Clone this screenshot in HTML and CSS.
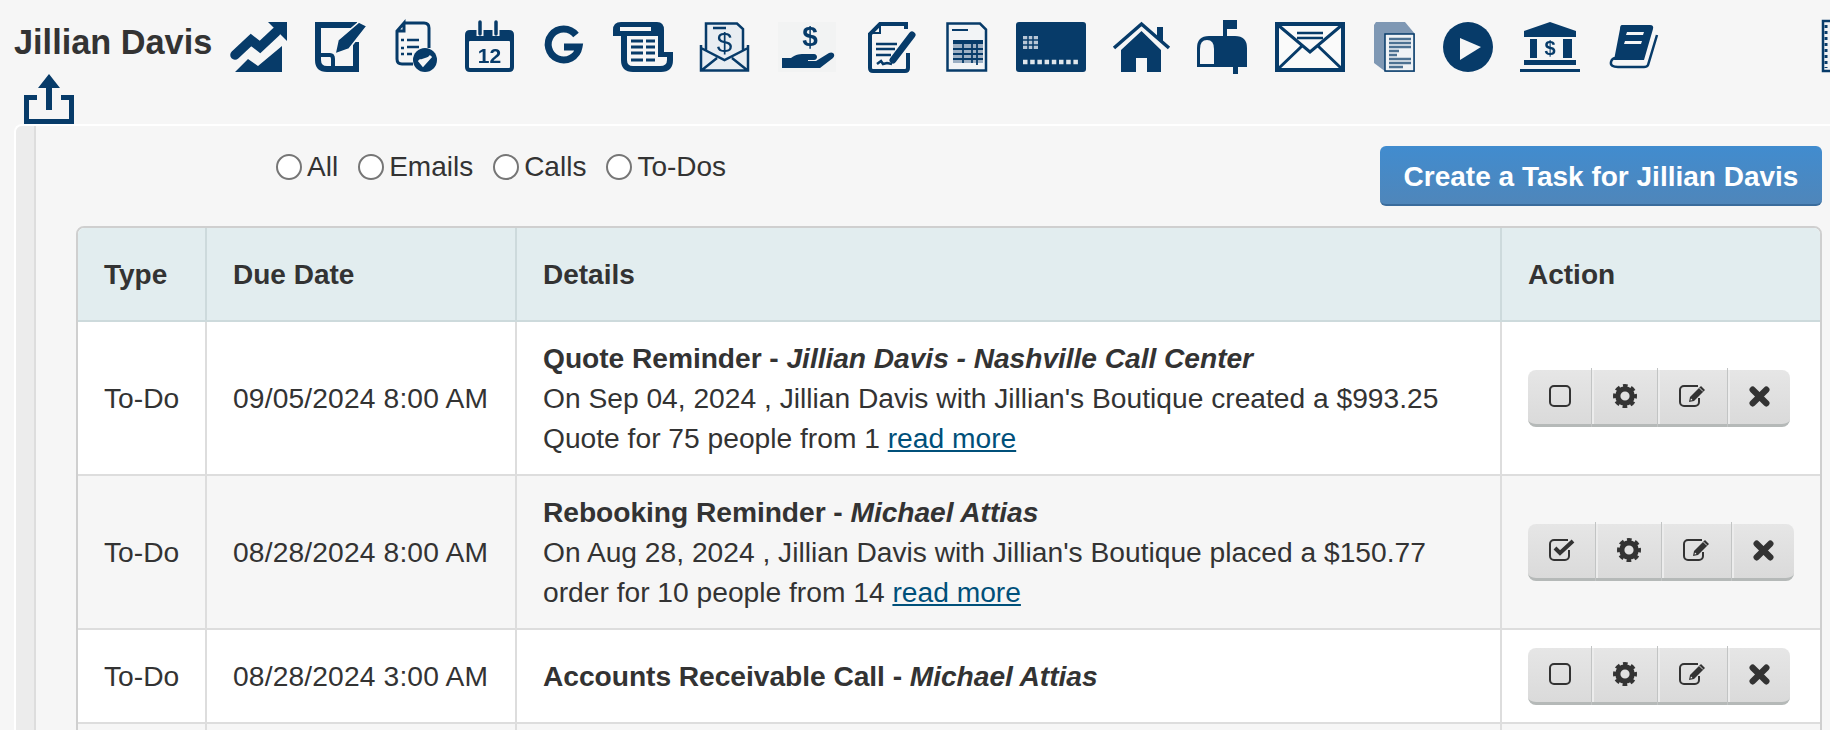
FILE: index.html
```html
<!DOCTYPE html>
<html lang="en">
<head>
<meta charset="utf-8">
<title>Jillian Davis</title>
<link rel="stylesheet" href="styles.css">
</head>
<body>
<svg class="defs" width="0" height="0" aria-hidden="true">
  <symbol id="i-square" viewBox="0 0 22 22"><rect x="1" y="1" width="20" height="20" rx="4" fill="none" stroke="#333" stroke-width="2"/></symbol>
  <symbol id="i-check" viewBox="0 0 26 22"><path d="M20 11v6a4 4 0 0 1-4 4H5a4 4 0 0 1-4-4V5a4 4 0 0 1 4-4h14" fill="none" stroke="#333" stroke-width="2"/><path d="M6 9l5 5L24 2" fill="none" stroke="#333" stroke-width="4"/></symbol>
  <symbol id="i-gear" viewBox="0 0 24 24"><circle cx="12" cy="12" r="7.2" fill="none" stroke="#333" stroke-width="5.2"/><circle cx="12" cy="12" r="10.2" fill="none" stroke="#333" stroke-width="3.6" stroke-dasharray="4.6 3.41" stroke-dashoffset="2.3"/></symbol>
  <symbol id="i-edit" viewBox="0 0 28 22"><path d="M20 13v4a4 4 0 0 1-4 4H5a4 4 0 0 1-4-4V5a4 4 0 0 1 4-4h14" fill="none" stroke="#333" stroke-width="2"/><path d="M10 17l1-5L22 1l4 4L15 16z" fill="#333"/><path d="M11.5 15.500l.5-2 1.500 1.500z" fill="#fff"/><path d="M20.500 3l3.500 3.500" stroke="#ddd" stroke-width="1"/></symbol>
  <symbol id="i-x" viewBox="0 0 20 20"><path d="M3.500 3.500l13 13M16.500 3.500l-13 13" fill="none" stroke="#333" stroke-width="6" stroke-linecap="round"/></symbol>
</svg>
<header class="top">
  <div class="toolbar">
    <h1 class="name">Jillian Davis</h1>
    <svg class="tool" width="61" height="50" viewBox="0 0 61 50"><path d="M5 33 21 18l9 7L46 10" fill="none" stroke-width="9.500" stroke-linecap="round"/><path class="solid" d="M38 0H57V19Z"/><path class="solid" d="M5 50 18 37l10 7L52 24V50Z"/></svg>
    <svg class="tool" width="56" height="50" viewBox="0 0 56 50"><path d="M42 3H3V38Q3 47 12 47H41V20" fill="none" stroke-width="6"/><path d="M5 33H15Q18 33 18 37V46" fill="none" stroke-width="4"/><path class="solid pen" d="M20 32 23 18 44 0 52 4 34 27Z"/></svg>
    <svg class="tool" width="46" height="50" viewBox="0 0 46 50"><path d="M9 1H29Q34 1 34 6V26M18 42H7Q2 42 2 37V9L9 1V9H2" fill="none" stroke-width="3"/><path d="M6 18h3M6 26h3M6 32h3M12 18h12M12 25h12M12 32h5" stroke-width="2.500"/><circle class="solid" cx="30" cy="38" r="12"/><path class="cut" d="M24 38l4 5 8-9" fill="none" stroke-width="3"/></svg>
    <svg class="tool" width="55" height="50" viewBox="0 0 55 50"><path class="solid" d="M5 8H44Q49 8 49 13V45Q49 50 44 50H5Q0 50 0 45V13Q0 8 5 8Z"/><rect class="cut" x="4" y="19" width="41" height="27" rx="1"/><path class="cutline" d="M15 0V14M31 0V14" stroke-width="7"/><path d="M15 0V12M31 0V12" stroke-width="3.500" stroke-linecap="round"/><text class="num" x="24.500" y="41" text-anchor="middle">12</text></svg>
    <svg class="tool" width="45" height="50" viewBox="0 0 45 50"><path d="M32 13A15.500 15.500 0 1 0 35 25H20" fill="none" stroke-width="7"/></svg>
    <svg class="tool" width="63" height="50" viewBox="0 0 63 50"><path class="solid" d="M8 0H44Q51 0 51 8V30H60V38Q60 50 48 50H20Q8 50 8 38V14H0V8Q0 0 8 0Z"/><path class="cut" d="M7 5H38V9H7ZM14 14H45V35H54V38Q54 44 47 44H20Q14 44 14 38Z"/><path d="M18 19H30M33 19H42M18 25H30M33 25H42M18 31H30M33 31H42M18 38H30M33 38H42" stroke-width="3"/></svg>
    <svg class="tool" width="54" height="50" viewBox="0 0 54 50"><path class="tint" d="M6 22V1H37L43 7V22L49 26V49H1V26Z"/><path d="M6 28V1.500H37L43 7V28M1 23V48.500H48V23M1 26 24.500 38 48 26M2 48 17 36M47 48 32 36M13 6H26" fill="none" stroke-width="2.500"/><text class="dollar" x="24.500" y="30" text-anchor="middle">$</text></svg>
    <svg class="tool" width="66" height="50" viewBox="0 0 66 50"><rect class="haze" width="58" height="50"/><text class="hand-dollar" x="32" y="24" text-anchor="middle">$</text><path class="solid" d="M4 36H13C18 32 22 32 28 32H36C40 32 40 38 36 38H30V39H38L51 31C55 29 58 33 55 36L42 46H4Z"/></svg>
    <svg class="tool" width="54" height="50" viewBox="0 0 54 50"><path d="M38 7V2H12L2 12V46Q2 49 5 49H37Q40 49 40 46V31" fill="none" stroke-width="4"/><path d="M12 3V11H3" fill="none" stroke-width="2"/><path d="M8 22H29M8 27H27M8 33H23M9 42 13 39 15 42 19 41 24 42" fill="none" stroke-width="2.500"/><path d="M25 38 44 13" stroke-width="7" stroke-linecap="round"/></svg>
    <svg class="tool" width="46" height="50" viewBox="0 0 46 50"><path d="M1.500 1.500H34L40 7.500V48.500H1.500Z" fill="#f2f4f6" stroke-width="2.500"/><path d="M6 8H22" stroke-width="2"/><path class="solid" d="M7 18H37V22H7Z"/><path class="soft" d="M7 22H37V41H7Z"/><path d="M7 27H37M7 32H37M7 37H37M17 22V41M26 22V41M31 22V43" stroke-width="1.800"/></svg>
    <svg class="tool" width="73" height="50" viewBox="0 0 73 50"><rect class="solid" width="70" height="50" rx="3"/><path class="pale" d="M7 14H22V27H7Z"/><path d="M7 18H22M7 23H22M12 14V27M17 14V27" stroke-width="1.500"/><path class="dots" d="M7 40H63" stroke-width="4.500" stroke-dasharray="4.500 2.700"/></svg>
    <svg class="tool" width="60" height="50" viewBox="0 0 60 50"><path d="M1 26 28.500 2 56 26" fill="none" stroke-width="3.500"/><path class="solid" d="M44 5H50V21L44 16Z"/><path class="solid" d="M8 28 28.500 9 48 28V50H34V36H23V50H8Z"/></svg>
    <svg class="tool" width="54" height="50" viewBox="0 0 54 50"><path class="solid" d="M26 -2H40V7H30V14H38Q50 14 50 26V45H41V52H36V45H0V26Q0 14 12 14H26Z"/><path class="cut" d="M3 42V27Q3 18 10 18Q17 18 17 27V42Z"/></svg>
    <svg class="tool" width="74" height="50" viewBox="0 0 74 50"><rect x="2" y="2" width="66" height="46" fill="#fafafa" stroke-width="4"/><path d="M3 3 35 30 67 3M3 47 27 24M67 47 43 24" fill="none" stroke-width="3"/><path d="M22 11H48M22 16H48" stroke-width="2.500"/></svg>
    <svg class="tool" width="46" height="50" viewBox="0 0 46 50"><path class="gray" d="M1 3 3 0H32L42 12V50H13L1 41Z"/><rect x="12" y="12" width="29" height="37" fill="#f0f3f6" stroke-width="1.500"/><path d="M16 17H38M16 21H38M16 25H38M16 29H26M16 33H24M16 37H38M16 41H38M16 45H30" stroke-width="2.400" opacity=".7"/></svg>
    <svg class="tool" width="53" height="50" viewBox="0 0 53 50"><circle class="solid" cx="25" cy="25" r="25"/><path class="cut" d="M17 16 38 25 17 38Z"/></svg>
    <svg class="tool" width="66" height="50" viewBox="0 0 66 50"><path class="solid" d="M4 9 30 0 56 9V15H4ZM10 17H17V36H10ZM43 17H52V36H43ZM4 38H56V43H4ZM0 47H60V50H0Z"/><text class="bank-dollar" x="30" y="33" text-anchor="middle">$</text></svg>
    <svg class="tool" width="188" height="50" viewBox="0 0 188 50"><path class="solid" d="M12 3H40Q44 3 43 7L34 38H4L10 7Q10 3 12 3Z"/><path class="cut" d="M17 10H34L33 13H16ZM15 19H32L31 22H14Z"/><path d="M47 13 38 43Q37 45 34 45H8Q0 45 1 40Q2 36 6 36" fill="none" stroke-width="2.500"/></svg>
    <svg class="tool" width="47" height="50" viewBox="0 0 47 50"><rect x="1" y="-1" width="46" height="50" fill="#eef1f4" stroke-width="2.500"/><path d="M4 3V46" stroke-width="3" stroke-dasharray="3 3"/></svg>
  </div>
  <svg class="tool share" width="50" height="50" viewBox="0 0 50 50"><path d="M13 23.500H2.500V47.500H47.500V23.500H37" fill="none" stroke-width="5"/><path class="solid" d="M25 0 36 14H28V36H22V14H14Z"/></svg>
</header>
<main class="panel">
  <div class="rail"></div>
  <div class="content">
    <div class="controls">
      <form class="filters">
        <label class="filter"><input type="radio" name="f">All</label>
        <label class="filter"><input type="radio" name="f">Emails</label>
        <label class="filter"><input type="radio" name="f">Calls</label>
        <label class="filter"><input type="radio" name="f">To-Dos</label>
      </form>
      <button class="create" type="button">Create a Task for Jillian Davis</button>
    </div>
    <div class="table-wrap">
      <table class="tasks">
        <colgroup><col class="c-type"><col class="c-date"><col class="c-details"><col></colgroup>
        <thead><tr><th>Type</th><th>Due Date</th><th>Details</th><th>Action</th></tr></thead>
        <tbody>
          <tr>
            <td>To-Do</td><td>09/05/2024 8:00 AM</td>
            <td><b>Quote Reminder - <i>Jillian Davis - Nashville Call Center</i></b><br>On Sep 04, 2024 , Jillian Davis with Jillian's Boutique created a $993.25<br>Quote for 75 people from 1 <a href="#">read more</a></td>
            <td class="act-cell"><div class="actions">
              <button class="act" type="button"><svg width="22" height="22"><use href="#i-square"/></svg></button>
              <button class="act" type="button"><svg width="24" height="24"><use href="#i-gear"/></svg></button>
              <button class="act" type="button"><svg width="28" height="22"><use href="#i-edit"/></svg></button>
              <button class="act" type="button"><svg width="21" height="21"><use href="#i-x"/></svg></button>
            </div></td>
          </tr>
          <tr class="alt">
            <td>To-Do</td><td>08/28/2024 8:00 AM</td>
            <td><b>Rebooking Reminder - <i>Michael Attias</i></b><br>On Aug 28, 2024 , Jillian Davis with Jillian's Boutique placed a $150.77<br>order for 10 people from 14 <a href="#">read more</a></td>
            <td class="act-cell"><div class="actions">
              <button class="act" type="button"><svg width="26" height="22"><use href="#i-check"/></svg></button>
              <button class="act" type="button"><svg width="24" height="24"><use href="#i-gear"/></svg></button>
              <button class="act" type="button"><svg width="28" height="22"><use href="#i-edit"/></svg></button>
              <button class="act" type="button"><svg width="21" height="21"><use href="#i-x"/></svg></button>
            </div></td>
          </tr>
          <tr>
            <td>To-Do</td><td>08/28/2024 3:00 AM</td>
            <td><b>Accounts Receivable Call - <i>Michael Attias</i></b></td>
            <td class="act-cell"><div class="actions">
              <button class="act" type="button"><svg width="22" height="22"><use href="#i-square"/></svg></button>
              <button class="act" type="button"><svg width="24" height="24"><use href="#i-gear"/></svg></button>
              <button class="act" type="button"><svg width="28" height="22"><use href="#i-edit"/></svg></button>
              <button class="act" type="button"><svg width="21" height="21"><use href="#i-x"/></svg></button>
            </div></td>
          </tr>
          <tr class="alt filler"><td></td><td></td><td></td><td></td></tr>
        </tbody>
      </table>
    </div>
  </div>
</main>
</body>
</html>
```

FILE: styles.css
```css
html,body{margin:0;height:100%;overflow:hidden}
body{background:#f6f6f6;color:#333;font-family:"Liberation Sans",Arial,sans-serif;font-size:28px}
.defs{position:absolute}
.top{height:124px;padding:22px 0 0 14px;box-sizing:border-box;overflow:hidden}
.toolbar{display:flex;align-items:flex-start;gap:24px;height:52px;width:1900px}
.name{margin:0;width:192px;white-space:nowrap;font-size:34.3px;line-height:40px;font-weight:700}
.tool{display:block;flex:none;overflow:visible;fill:#073b69;stroke:#073b69;stroke-width:0;filter:blur(.45px)}
.tool path,.tool rect,.tool circle{stroke:#073b69}
.tool .solid{fill:#073b69;stroke:none}
.tool .pen{stroke:#f6f6f6;stroke-width:1.5px}
.tool .cut{fill:#f6f6f6;stroke:#f6f6f6}
.tool .cutline{stroke:#f6f6f6}
.tool .tint{fill:#e8edf2;stroke:none}
.tool .haze{fill:#f2f3f3;stroke:none}
.tool .soft{fill:#9db0c4;stroke:none}
.tool .pale{fill:#b7c6d6;stroke:none}
.tool .gray{fill:#7f98b4;stroke:none}
.tool .dots{stroke:#dfe6ec}
.tool text{stroke:none;fill:#073b69;font-family:"Liberation Sans",Arial,sans-serif;font-weight:700}
.tool .num{font-size:21px}
.tool .dollar{font-size:28px;font-weight:400}
.tool .hand-dollar{font-size:28px}
.tool .bank-dollar{font-size:20px}
.share{margin-left:10px}
.panel{display:flex;margin-left:14px;border:2px solid #fff;border-width:2px 0 0 2px;border-radius:8px 0 0 0;height:604px;overflow:hidden}
.rail{width:18px;flex:none;background:#ececec;border-right:2px solid #ddd}
.content{flex:1;min-width:0;padding:20px 8px 0 40px}
.controls{display:flex;justify-content:space-between;height:80px}
.filters{display:flex;gap:20px;margin-left:200px;height:42px}
.filter{display:flex;align-items:center;gap:5px}
.filter input{appearance:none;margin:0;width:26px;height:26px;border:2px solid #767676;border-radius:50%;background:#fff}
.create{height:60px;width:442px;padding:3px 0 0;border:0;border-bottom:2px solid #3a6c9c;border-radius:6px;background:linear-gradient(#418ccf,#4f86ba);color:#fff;font:700 28px "Liberation Sans",Arial,sans-serif}
.table-wrap{border:2px solid #cfcfcf;border-radius:8px 8px 0 0;overflow:hidden;background:#fff}
.tasks{width:100%;table-layout:fixed;border-collapse:separate;border-spacing:0;font-size:28.2px}
.c-type{width:129px}.c-date{width:310px}.c-details{width:985px}
.tasks th,.tasks td{text-align:left;padding:16px 26px;line-height:40px;border-right:2px solid #ddd;border-bottom:2px solid #ddd}
.tasks th{padding-top:17px;padding-bottom:15px}
.tasks th:first-child,.tasks td:first-child{padding-right:0}
.tasks td:nth-child(2){white-space:nowrap;letter-spacing:.15px}
.tasks td b{letter-spacing:-.05px}
.tasks th{font-size:28px}
.tasks th:last-child,.tasks td:last-child{border-right:0}
.tasks th{background:#e2edef;height:60px;border-color:#cddadc}
.tasks .act-cell{padding:17.5px 0 17.5px 26px}
.alt td{background:#f6f6f6}
.filler td{height:100px}
.tasks a{color:#00507a}
.actions{display:flex}
.act{position:relative;height:57px;padding:0 20.5px 1px;border:0;border-bottom:3px solid #b5b9b8;background:linear-gradient(#e6e6e6,#dadada);display:flex;align-items:center;box-sizing:border-box}
.act svg{display:block}
.act:first-child{border-radius:8px 0 0 8px}
.act:last-child{border-radius:0 8px 8px 0}
.act + .act{margin-left:1px;box-shadow:inset 2px 0 #ececec}
.act + .act::before{content:"";position:absolute;left:-1px;top:-2px;bottom:-3px;width:1px;background:#c2c4c4}
```
